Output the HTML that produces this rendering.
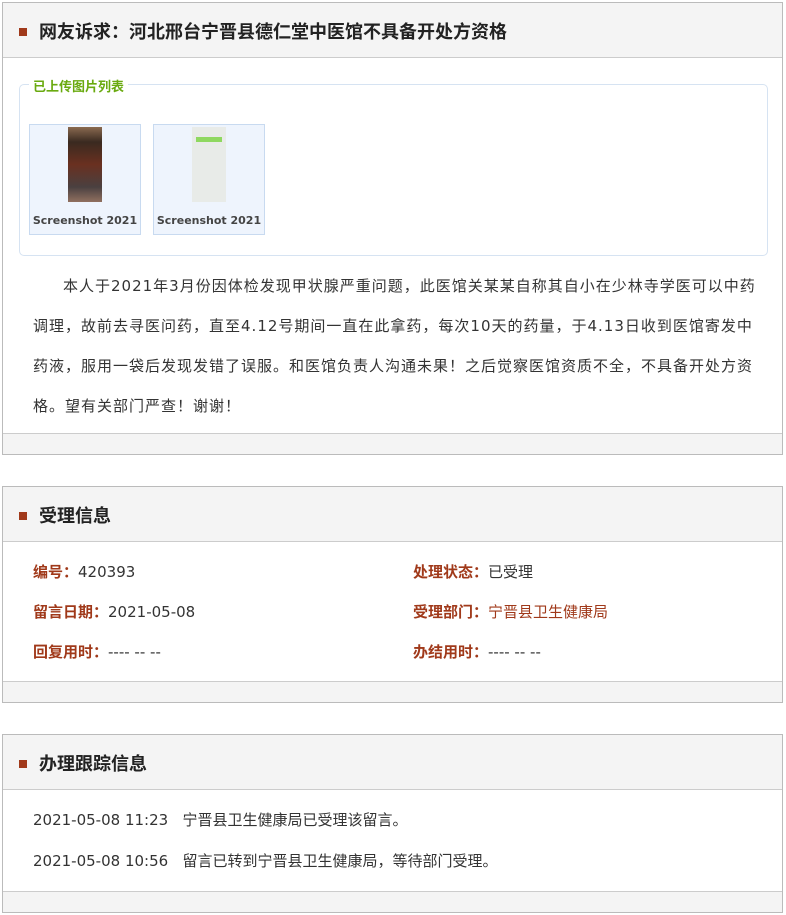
<!DOCTYPE html>
<html><head><meta charset="utf-8"><style>
body{margin:0;background:#fff;font-family:"DejaVu Sans","Noto Sans CJK SC",sans-serif;color:#333;}
.p{position:absolute;left:2px;width:779px;border:1px solid #bbb;background:#fff;}
.h{height:54px;background:#f4f4f4;border-bottom:1px solid #ccc;position:relative;}
.h i{position:absolute;left:16px;top:25px;width:8px;height:8px;background:#a0391a;}
.h b{position:absolute;left:36px;top:15px;font-size:18px;color:#222;font-family:"Noto Sans CJK SC",sans-serif;}
.f{position:absolute;left:0;right:0;bottom:0;height:20px;background:#f4f4f4;border-top:1px solid #ccc;}
.fs{position:absolute;left:16px;top:81px;width:747px;height:170px;border:1px solid #d6e3f2;border-radius:5px;}
.lg{position:absolute;left:26px;top:73px;background:#fff;padding:0 4px;color:#6aaa10;font-size:13px;font-weight:bold;}
.th{position:absolute;top:121px;width:110px;height:109px;background:#eef4fd;border:1px solid #c8daf0;}
.th span{position:absolute;left:0;right:0;top:89px;text-align:center;font-size:11px;font-weight:bold;color:#444;white-space:nowrap;overflow:hidden}
.txt{position:absolute;left:30px;top:263px;width:750px;font-size:15px;line-height:40px;white-space:nowrap;letter-spacing:1px;}
.r{position:absolute;font-size:15px;}
.r b{color:#a0391a;font-family:"Noto Sans CJK SC",sans-serif;}
</style></head><body>
<div class="p" style="top:2px;height:451px">
<div class="h"><i></i><b>网友诉求：河北邢台宁晋县德仁堂中医馆不具备开处方资格</b></div>
<div class="fs"></div><div class="lg">已上传图片列表</div>
<div class="th" style="left:26px"><div style="position:absolute;left:38px;top:2px;width:34px;height:75px;background:linear-gradient(#8a6a50,#3a2a20 20%,#6a3020 50%,#4a4040 80%,#907060)"></div><span>Screenshot 2021</span></div>
<div class="th" style="left:150px"><div style="position:absolute;left:38px;top:2px;width:34px;height:75px;background:#e8ebe8"><div style="margin:10px 4px;height:5px;background:#8fd860"></div></div><span>Screenshot 2021</span></div>
<div class="txt"><span style="display:inline-block;width:30px"></span>本人于2021年3月份因体检发现甲状腺严重问题，此医馆关某某自称其自小在少林寺学医可以中药<br>调理，故前去寻医问药，直至4.12号期间一直在此拿药，每次10天的药量，于4.13日收到医馆寄发中<br>药液，服用一袋后发现发错了误服。和医馆负责人沟通未果！之后觉察医馆资质不全，不具备开处方资<br>格。望有关部门严查！谢谢！</div>
<div class="f"></div>
</div>
<div class="p" style="top:486px;height:215px">
<div class="h"><i></i><b>受理信息</b></div>
<div class="r" style="left:30px;top:74px"><b>编号：</b>420393</div>
<div class="r" style="left:410px;top:74px"><b>处理状态：</b>已受理</div>
<div class="r" style="left:30px;top:114px"><b>留言日期：</b>2021-05-08</div>
<div class="r" style="left:410px;top:114px"><b>受理部门：</b><span style="color:#a0391a">宁晋县卫生健康局</span></div>
<div class="r" style="left:30px;top:154px"><b>回复用时：</b>---- -- --</div>
<div class="r" style="left:410px;top:154px"><b>办结用时：</b>---- -- --</div>
<div class="f"></div>
</div>
<div class="p" style="top:734px;height:177px">
<div class="h"><i></i><b>办理跟踪信息</b></div>
<div class="r" style="left:30px;top:74px">2021-05-08 11:23&nbsp;&nbsp;&nbsp;宁晋县卫生健康局已受理该留言。</div>
<div class="r" style="left:30px;top:115px">2021-05-08 10:56&nbsp;&nbsp;&nbsp;留言已转到宁晋县卫生健康局，等待部门受理。</div>
<div class="f"></div>
</div>
</body></html>
